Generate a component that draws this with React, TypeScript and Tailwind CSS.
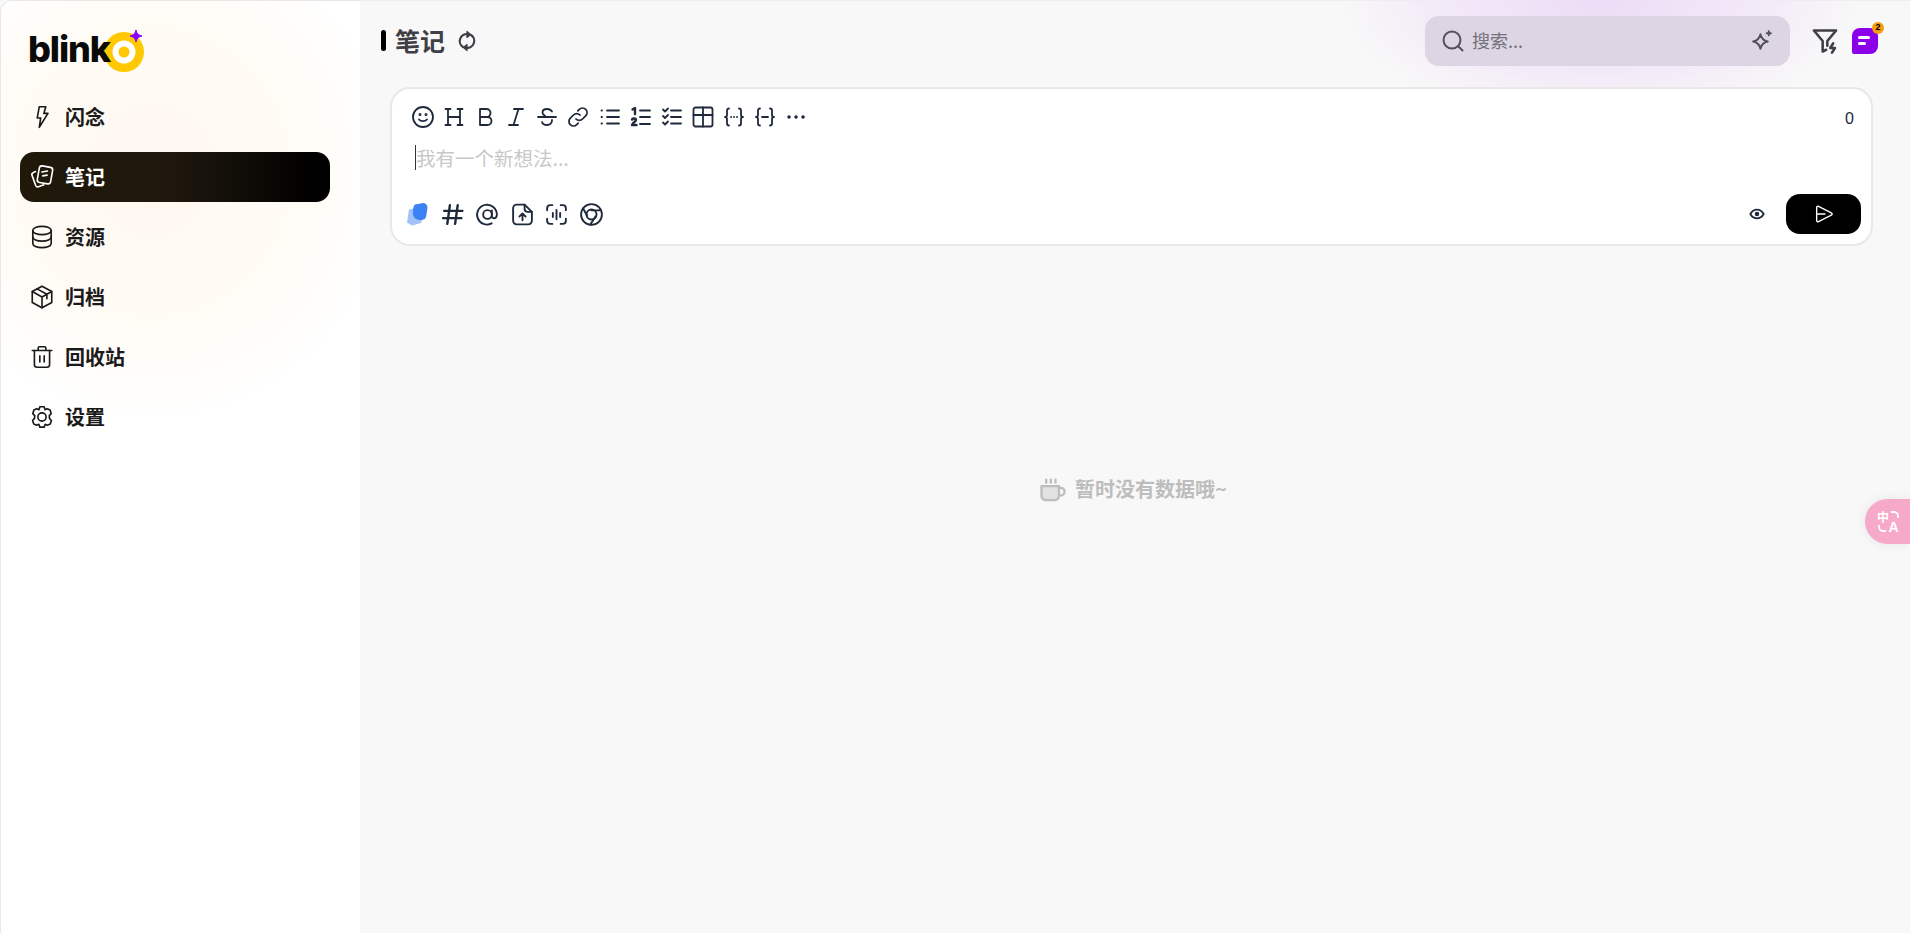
import React from "react";

const S = ({ size = 24, w = 2, className = "", children }: { size?: number; w?: number; className?: string; children: React.ReactNode }) => (
  <svg width={size} height={size} viewBox="0 0 24 24" fill="none" stroke="currentColor" strokeWidth={w} strokeLinecap="round" strokeLinejoin="round" className={"shrink-0 " + className}>
    {children}
  </svg>
);

const nav: { label: string; active?: boolean; icon: React.ReactNode }[] = [
  { label: "闪念", icon: <path d="M9.500 2.500h6l-1.800 6.200h3.800L9.500 21.500l1.300-8.600H7.600z" /> },
  {
    label: "笔记",
    active: true,
    icon: (
      <>
        <rect x="8.500" y="2.300" width="12.500" height="15.500" rx="2.500" transform="rotate(10 14.700 10)" />
        <path d="M12 7.400l5-.9M12.700 11l4-.7" />
        <path d="M6 7L3.800 8c-1 .5-1.400 1.500-1 2.500l3.400 9.300c.4 1 1.500 1.500 2.500 1.200l5-1.800" />
      </>
    ),
  },
  {
    label: "资源",
    icon: (
      <>
        <ellipse cx="12" cy="6" rx="8.500" ry="3.800" />
        <path d="M3.500 6v12c0 2.100 3.800 3.800 8.500 3.800s8.500-1.700 8.500-3.800V6" />
        <path d="M3.500 12c0 2.100 3.800 3.800 8.500 3.800s8.500-1.700 8.500-3.800" />
      </>
    ),
  },
  {
    label: "归档",
    icon: (
      <>
        <path d="M12 2l9 5v10l-9 5-9-5V7z" />
        <path d="M3 7l9 5 9-5M12 12v10M7.500 4.500l9 5v4" />
      </>
    ),
  },
  {
    label: "回收站",
    icon: (
      <>
        <path d="M3 6h18M8.500 6V3.500c0-.6.400-1 1-1h5c.6 0 1 .4 1 1V6" />
        <path d="M5 6v13c0 1.400 1.100 2.500 2.500 2.500h9c1.400 0 2.500-1.100 2.500-2.500V6" />
        <path d="M10 11v5.500M14 11v5.500" />
      </>
    ),
  },
  {
    label: "设置",
    icon: (
      <>
        <circle cx="12" cy="12" r="3.800" />
        <path d="M10 2.500h4l.8 2.800 2-.9 2.700 1.200 1 3.300-1.800 1.800.2 2.600 1.800 1.900-1.100 3.300-2.600 1.100-2.100-.9-.9 2.700h-4l-.9-2.700-2.100.9-2.600-1.100-1.100-3.300 1.800-1.900.2-2.600-1.800-1.800 1-3.300 2.700-1.200 2 .9z" />
      </>
    ),
  },
];

const top: React.ReactNode[] = [
  <>
    <circle cx="12" cy="12" r="10" />
    <path d="M8 14.500c1.800 2.200 6.200 2.200 8 0" />
    <circle cx="9" cy="9.500" r=".6" />
    <circle cx="15" cy="9.500" r=".6" />
  </>,
  <path d="M6 4v16M18 4v16M6 12h12M3.500 4h5M3.500 20h5M15.500 4h5M15.500 20h5" />,
  <path d="M7 4h6.500a4 4 0 0 1 0 8H7zM7 12h7.500a4 4 0 0 1 0 8H7z" />,
  <path d="M10 4h9M5 20h9M14.500 4l-5 16" />,
  <>
    <path d="M3 12h18" />
    <path d="M17 6.500C16 4.800 14 4 12 4 9.500 4 7.500 5.300 7.500 7.500c0 1.500 1 2.500 2.500 3.200M17 15c.3 3-2 5-5 5-2.500 0-4.500-1-5-3" />
  </>,
  <>
    <path d="M10 14a4.500 4.500 0 0 0 6.500 0l3.200-3.200a4.500 4.500 0 0 0-6.400-6.400l-1.500 1.500" />
    <path d="M14 10a4.500 4.500 0 0 0-6.500 0l-3.200 3.200a4.500 4.500 0 0 0 6.400 6.400l1.500-1.500" />
  </>,
  <path d="M9 5.500h12M9 12h12M9 18.500h12M3.500 5.500h.5M3.500 12h.5M3.500 18.500h.5" />,
  <>
    <path d="M11 5.500h10M11 12h10M11 19h10" />
    <path d="M3.500 4.500L6 3v6" strokeWidth={2.400} />
    <path d="M3 14.500c.5-1.500 4-1.500 4 .5 0 1.500-4 3-4 5h4.500" strokeWidth={2.400} />
  </>,
  <>
    <path d="M11 5.500h10M11 12h10M11 18.500h10" />
    <path d="M3 4.500l2 2 3-3M3 11l2 2 3-3M3 17.500l2 2 3-3" />
  </>,
  <>
    <rect x="2.500" y="2.500" width="19" height="19" rx="2" />
    <path d="M2.500 10h19M12 2.500v19" />
  </>,
  <>
    <path d="M7 3.500c-1.500 0-2 .8-2 2V10c0 1-.8 2-2 2 1.200 0 2 1 2 2v4.500c0 1.200.5 2 2 2M17 3.500c1.500 0 2 .8 2 2V10c0 1 .8 2 2 2-1.200 0-2 1-2 2v4.500c0 1.200-.5 2-2 2" />
    <path d="M9 12h.1M12 12h.1M15 12h.1" />
  </>,
  <>
    <path d="M7 3.500c-1.500 0-2 .8-2 2V10c0 1-.8 2-2 2 1.200 0 2 1 2 2v4.500c0 1.200.5 2 2 2M17 3.500c1.500 0 2 .8 2 2V10c0 1 .8 2 2 2-1.200 0-2 1-2 2v4.500c0 1.200-.5 2-2 2" />
    <path d="M9 12h6" />
  </>,
  <path d="M5 12h.1M12 12h.1M19 12h.1" strokeWidth={3.400} />,
];

const bottom: React.ReactNode[] = [
  <path d="M9.500 3L7 21M17 3l-2.500 18M4 8.500h17.500M3 15.500h17.500" strokeWidth={2.300} />,
  <>
    <circle cx="12" cy="12" r="4.200" />
    <path d="M16.200 8v5.500c0 3 4.800 3 4.800-1.500A9.500 9.500 0 1 0 16 20.500" />
  </>,
  <>
    <path d="M14 2.500H6.500a3.500 3.500 0 0 0-3.500 3.500v12a3.500 3.500 0 0 0 3.500 3.500h11a3.500 3.500 0 0 0 3.500-3.500V9.500z" />
    <path d="M14 2.500v4a3 3 0 0 0 3 3h4M12 17.500v-6M9 14l3-3 3 3" />
  </>,
  <path d="M3 8V6a3 3 0 0 1 3-3h2M16 3h2a3 3 0 0 1 3 3v2M21 16v2a3 3 0 0 1-3 3h-2M8 21H6a3 3 0 0 1-3-3v-2M8.500 10.500v4M12 7.500v9M15.500 10.500v4" />,
  <>
    <circle cx="12" cy="12" r="10" />
    <circle cx="12" cy="12" r="4.800" />
    <path d="M21.200 8H12M3.900 6l4 7.500M10.800 21.900l5-8" />
  </>,
];

export default function App() {
  return (
    <div className="flex h-[933px] w-full overflow-hidden bg-[#f8f8f8] font-['Noto_Sans_CJK_SC','Liberation_Sans',sans-serif]">
      <aside className="flex w-[360px] shrink-0 flex-col rounded-tl-[12px] border-t border-l border-[#e8e8e8] bg-white bg-[radial-gradient(ellipse_240px_250px_at_150px_170px,#fff8f0_0%,#fffbf5_60%,#ffffff_100%)] pl-[19px] pr-[30px]">
        <div className="h-[91px] pl-[8px] pt-[28px]">
          <svg width="120" height="46" viewBox="0 0 120 46" className="overflow-visible">
            <circle cx="96" cy="23" r="20" fill="#ffc800" />
            <circle cx="96" cy="23" r="11.500" fill="#fff" />
            <circle cx="96" cy="23" r="5.500" fill="#ffc800" />
            <text x="0" y="33" fontFamily="Inter, sans-serif" fontWeight="800" fontSize="36" letterSpacing="-1.100" fill="#0a0a0a">blink</text>
            <path d="M108 1c.8 3.500 2 4.700 6 6-4 1.300-5.200 2.500-6 6-.8-3.500-2-4.700-6-6 4-1.300 5.200-2.500 6-6z" fill="#8a00ff" stroke="#8a00ff" strokeWidth="1" />
          </svg>
        </div>
        <nav className="flex flex-col gap-[10px]">
          {nav.map((n) => (
            <div
              key={n.label}
              className={
                "flex h-[50px] items-center gap-[10px] rounded-[14px] pl-[9px] text-[20px] font-bold " +
                (n.active ? "bg-[linear-gradient(90deg,#201809_0%,#1e170d_50%,#000000_95%)] text-white" : "text-[#1a1a1a]")
              }
            >
              <S size={26} w={1.500}>{n.icon}</S>
              <span>{n.label}</span>
            </div>
          ))}
        </nav>
      </aside>

      <main className="relative min-w-0 flex-1 border-t border-[#eeeeee]">
        <div className="pointer-events-none absolute left-[980px] top-[-120px] h-[240px] w-[520px] bg-[radial-gradient(ellipse_closest-side,#ecdcf6_0%,#f2e8f8_55%,#f8f8f800_100%)]" />
        <header className="relative flex h-[86px] items-center justify-between pb-[7px] pl-[21px] pr-[32px]">
          <div className="flex items-center">
            <div className="h-[21px] w-[5px] rounded-full bg-black" />
            <h1 className="ml-[9px] text-[25px] font-bold text-[#3f3f46]">笔记</h1>
            <S size={24} w={2.200} className="ml-[10px] text-[#3f3f46]">
              <path d="M13 5.200a7 7 0 0 0-5 12.800M11 18.800a7 7 0 0 0 5-12.800" />
              <path d="M12 2.500v6l3.500-3zM12 21.500v-6l-3.500 3z" fill="currentColor" strokeWidth={1.200} />
            </S>
          </div>
          <div className="flex items-center">
            <div className="flex h-[50px] w-[365px] items-center rounded-[14px] bg-[#ded5e4] pl-[16px] pr-[16px] text-[#52525b]">
              <S size={24} w={2}>
                <circle cx="11" cy="11" r="8.500" />
                <path d="M17.500 17.500L21.500 21.500" />
              </S>
              <span className="ml-[7px] flex-1 text-[18px] text-[#71717a]">搜索...</span>
              <S size={25} w={1.900}>
                <path d="M11 6c.8 4 2.500 6 7 7-4.500 1-6.200 3-7 7-.8-4-2.500-6-7-7 4.500-1 6.200-3 7-7z" />
                <path d="M19 3v4M17 5h4" />
              </S>
            </div>
            <S size={28} w={2.200} className="ml-[21px] text-[#3f3f46]">
              <path d="M2.500 3h19l-7.500 9v4M10 12L2.500 3M10 12v9l3-1.500" />
              <path d="M19 14l-2.500 4h4L18 22" />
            </S>
            <div className="relative ml-[13px] flex h-[26px] w-[26px] flex-col justify-center gap-[3px] rounded-[8px] rounded-bl-[2px] bg-[#8a00e8] pl-[6px]">
              <div className="h-[3px] w-[12px] rounded-full bg-white" />
              <div className="h-[3px] w-[8px] rounded-full bg-white" />
              <div className="absolute right-[-6px] top-[-6px] flex h-[12px] w-[12px] items-center justify-center rounded-full bg-[#f59e0b] font-['Liberation_Sans',sans-serif] text-[9px] font-bold text-black">2</div>
            </div>
          </div>
        </header>

        <section className="relative ml-[30px] mr-[37px] flex h-[159px] flex-col rounded-[20px] border-2 border-[#e8e8e8] bg-white">
          <div className="flex h-[40px] items-end pl-[19px] pr-[17px] text-[#1e293b]">
            <div className="flex flex-1 gap-[7.100px]">
              {top.map((t, i) => (
                <S key={i} size={24} w={1.800}>{t}</S>
              ))}
            </div>
            <span className="font-['Liberation_Sans',sans-serif] text-[16px] leading-[20px] text-[#1e293b]">0</span>
          </div>
          <div className="relative mt-[16px] h-[26px] pl-[24px] text-[19.500px] leading-[26px] text-[#c8c8c8]">
            <div className="absolute left-[23px] top-0 h-[25px] w-px bg-[#333]" />
            我有一个新想法...
          </div>
          <div className="mt-auto flex h-[56px] items-center pb-[4px] pl-[13px] pr-[10px] text-[#1e293b]">
            <svg width="24" height="24" viewBox="0 0 24 24" className="shrink-0">
              <path d="M4 7.500l10-2 5 8-3 7.500-9 2.500-5-3z" fill="#a3c2f7" />
              <path d="M10 2.500l8.500-1.500c3 .5 4.500 3 3.800 6l-1.300 8c-.5 2-2.500 3-5 3-3.500 0-6.500-1-7.500-4-.8-2.500-1-9 1.500-11.500z" fill="#3b82f6" />
            </svg>
            <div className="ml-[11px] flex flex-1 gap-[9.800px]">
              {bottom.map((t, i) => (
                <S key={i} size={25} w={1.800}>{t}</S>
              ))}
            </div>
            <S size={16} w={2.800} className="mr-[21px]">
              <path d="M2 12c2.500-4.500 6-6.500 10-6.500s7.500 2 10 6.500c-2.500 4.500-6 6.500-10 6.500S4.500 16.500 2 12z" />
              <circle cx="12" cy="12" r="2" fill="currentColor" />
            </S>
            <div className="flex h-[40px] w-[75px] items-center justify-center rounded-[14px] bg-black text-white">
              <S size={22} w={1.500}>
                <path d="M4 5c0-1.200 1-1.800 2-1.300l14 7c1.200.6 1.200 2 0 2.600l-14 7c-1 .5-2-.1-2-1.300zM5 12h8" />
              </S>
            </div>
          </div>
        </section>

        <div className="relative mt-[230px] flex h-[26px] items-center justify-center gap-[9px] pr-[5px] text-[20px] font-bold text-[#bdbdbd]">
          <S size={28} w={2}>
            <path d="M3 9.500h15v8.500a3.500 3.500 0 0 1-3.500 3.500h-8A3.500 3.500 0 0 1 3 18z" fill="#e2e2e2" />
            <path d="M18 11h1.500a2.500 2.500 0 0 1 0 6.500H18M7 4v2.500M11 4v2.500M15 4v2.500" />
          </S>
          <span>暂时没有数据哦~</span>
        </div>

        <div className="absolute right-0 top-[498px] flex h-[45px] w-[45px] items-center rounded-l-full bg-[#f7a9c9] pl-[12px] text-white shadow-[0_0_12px_rgba(0,0,0,0.08)]">
          <svg width="24" height="24" viewBox="0 0 24 24" fill="none" stroke="currentColor" strokeWidth="1.800" className="overflow-visible">
            <text x="0" y="12" fill="currentColor" stroke="none" fontSize="12" fontWeight="700" fontFamily="'Noto Sans CJK SC', sans-serif">中</text>
            <text x="11.500" y="22" fill="currentColor" stroke="none" fontSize="14" fontWeight="700" fontFamily="'Liberation Sans', sans-serif">A</text>
            <path d="M14 2h3a4 4 0 0 1 4 4v2M2 15v2a4 4 0 0 0 4 4h3" />
          </svg>
        </div>
      </main>
    </div>
  );
}
